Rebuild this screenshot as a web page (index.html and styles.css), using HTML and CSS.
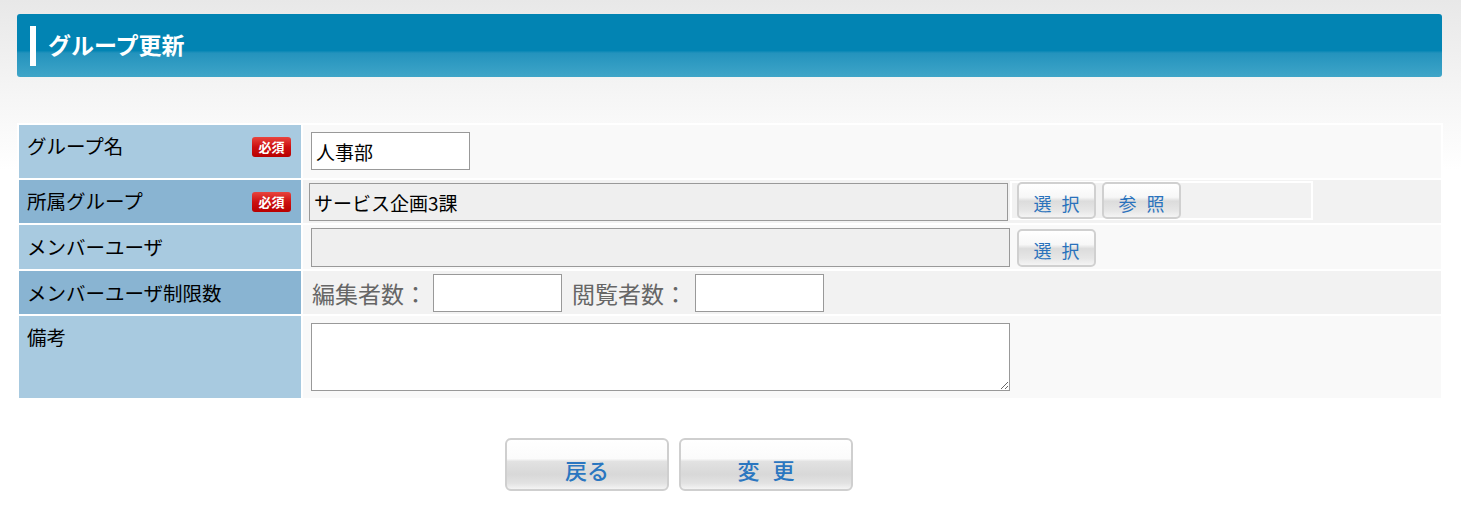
FILE: index.html
```html
<!DOCTYPE html>
<html lang="ja">
<head>
<meta charset="utf-8">
<title>グループ更新</title>
<link rel="stylesheet" href="styles.css">
</head>
<body>
<div class="page">
  <div class="title-bar"><span class="title-mark"></span><h1 class="title">グループ更新</h1></div>

  <table class="form-table">
    <tr class="row row-1">
      <th class="label label-light"><div class="label-inner"><span>グループ名</span><span class="req">必須</span></div></th>
      <td class="value value-light"><input class="txt txt-name" type="text" value="人事部"></td>
    </tr>
    <tr class="row row-2">
      <th class="label label-dark"><div class="label-inner"><span>所属グループ</span><span class="req">必須</span></div></th>
      <td class="value value-dark">
        <div class="line">
          <input class="txt txt-wide ro ro-first" type="text" value="サービス企画3課" readonly>
          <div class="btn-box">
            <button class="sbtn" type="button">選 択</button>
            <button class="sbtn" type="button">参 照</button>
          </div>
        </div>
      </td>
    </tr>
    <tr class="row row-3">
      <th class="label label-light"><div class="label-inner"><span>メンバーユーザ</span></div></th>
      <td class="value value-light">
        <div class="line line-3">
          <input class="txt txt-wide ro" type="text" value="" readonly>
          <button class="sbtn" type="button">選 択</button>
        </div>
      </td>
    </tr>
    <tr class="row row-4">
      <th class="label label-dark"><div class="label-inner"><span>メンバーユーザ制限数</span></div></th>
      <td class="value value-dark">
        <div class="line line-4">
          <span class="cap">編集者数：</span>
          <input class="txt txt-num" type="text">
          <span class="cap cap-2">閲覧者数：</span>
          <input class="txt txt-num" type="text">
        </div>
      </td>
    </tr>
    <tr class="row row-5">
      <th class="label label-light"><div class="label-inner"><span>備考</span></div></th>
      <td class="value value-light"><textarea class="memo"></textarea></td>
    </tr>
  </table>

  <div class="actions">
    <button class="bbtn bbtn-back" type="button">戻る</button>
    <button class="bbtn bbtn-go" type="button">変 更</button>
  </div>
</div>
</body>
</html>
```

FILE: styles.css
```css
html, body {
  margin: 0;
  padding: 0;
}
body {
  background: linear-gradient(to bottom, #e8e8e8 0px, #f6f6f6 100px, #fbfbfb 140px, #ffffff 170px) no-repeat;
  background-color: #fff;
  font-family: "Noto Sans CJK JP", "Noto Sans", sans-serif;
  color: #000;
  width: 1461px;
  height: 514px;
  overflow: hidden;
}
.page {
  padding: 14px 19px 0 17px;
}
.title-bar {
  height: 63px;
  border-radius: 3px;
  background: linear-gradient(to bottom, #0284b3 0%, #0284b3 58%, #2493bd 62%, #3fa5c8 100%);
  display: flex;
  align-items: center;
  padding-left: 13px;
  box-sizing: border-box;
}
.title-mark {
  width: 6px;
  height: 40px;
  background: #fff;
  margin-right: 12px;
}
.title {
  margin: 0;
  color: #fff;
  font-size: 23px;
  font-weight: bold;
  line-height: 1;
  padding-bottom: 2px;
}
.form-table {
  margin-top: 46px;
  width: 1426px;
  border-collapse: separate;
  border-spacing: 2px;
  background: #fff;
  table-layout: fixed;
}
.label {
  width: 282px;
  box-sizing: border-box;
  text-align: left;
  vertical-align: top;
  font-weight: normal;
  font-size: 19.5px;
  padding: 0 10px 0 8px;
}
.label-inner {
  display: flex;
  justify-content: space-between;
  align-items: center;
  height: 24px;
  line-height: 24px;
}
.row-1 .label { padding-top: 9px; height: 53px; }
.row-2 .label { padding-top: 9px; height: 43px; }
.row-3 .label { padding-top: 10px; height: 44px; }
.row-4 .label { padding-top: 10px; height: 43px; }
.row-5 .label { padding-top: 9px; height: 82px; }
.label-light { background: #a8cae0; }
.label-dark { background: #89b4d2; }
.value-light { background: #f9f9f9; }
.value-dark { background: #f2f2f2; }
.value {
  box-sizing: border-box;
  vertical-align: top;
  padding: 0 0 0 8px;
}
.req {
  display: inline-block;
  width: 39px;
  height: 20px;
  line-height: 20px;
  border-radius: 3px;
  background: linear-gradient(to bottom, #e8453e 0%, #cc1010 50%, #b80000 100%);
  color: #fff;
  font-size: 13px;
  font-weight: bold;
  text-align: center;
  margin-top: 2px;
}
.txt {
  box-sizing: border-box;
  border: 1px solid #999;
  background: #fff;
  font-family: "Noto Sans CJK JP", sans-serif;
  font-size: 19px;
  padding: 0 4px;
  margin: 0;
  outline: none;
  color: #000;
}
.txt-name {
  width: 159px;
  height: 38px;
  margin-top: 7px;
}
.line {
  display: flex;
  align-items: flex-start;
}
.row-2 .value { padding-left: 6px; padding-top: 1px; }
.txt-wide {
  width: 699px;
  height: 38px;
}
.ro {
  background: #efefef;
}
.ro-first {
  margin-top: 2px;
}
.btn-box {
  margin-left: 2px;
  width: 303px;
  height: 39px;
  box-sizing: border-box;
  border: 2px solid #fff;
  background: #f2f2f2;
  display: flex;
  gap: 6px;
  padding-left: 5px;
  align-items: center;
}
.sbtn {
  width: 79px;
  height: 37px;
  box-sizing: border-box;
  border: 2px solid #d0d0d0;
  border-radius: 5px;
  background: linear-gradient(to bottom, #ffffff 0%, #f7f7f7 40%, #dcdcdc 52%, #e6e6e6 80%, #f4f4f4 100%);
  color: #2a72bc;
  font-family: "Noto Sans CJK JP", sans-serif;
  font-size: 18px;
  letter-spacing: 3px;
  padding: 4px 0 0 3px;
  margin: 0;
  line-height: 1;
}
.row-3 .value { padding-top: 3px; }
.line-3 .sbtn { margin-left: 7px; margin-top: 1px; height: 38px; }
.line-3 .txt-wide { height: 39px; }
.row-4 .value { padding: 1px 0 0 2px; }
.line-4 {
  align-items: center;
  height: 41px;
}
.cap {
  font-size: 23px;
  color: #666;
  background: #f2f2f2;
  padding-left: 7px;
  padding-right: 6px;
  line-height: 38px;
}
.cap-2 {
  padding-left: 10px;
  padding-right: 8px;
  background: transparent;
}
.txt-num {
  width: 129px;
  height: 38px;
  margin-left: 0;
}
.row-5 .value { padding-top: 7px; }
.memo {
  display: block;
  box-sizing: border-box;
  width: 699px;
  height: 68px;
  border: 1px solid #999;
  background: #fff;
  margin: 0;
  resize: both;
}
.actions {
  display: flex;
  gap: 10px;
  padding-left: 488px;
  margin-top: 38px;
}
.bbtn {
  height: 53px;
  box-sizing: border-box;
  border: 2px solid #cfcfcf;
  border-radius: 6px;
  background: linear-gradient(to bottom, #ffffff 0%, #fbfbfb 38%, #e2e2e2 44%, #d8d8d8 70%, #e2e2e2 88%, #f4f4f4 100%);
  color: #2a76c0;
  font-family: "Noto Sans CJK JP", sans-serif;
  font-size: 22px;
  font-weight: 500;
  padding: 8px 0 0 0;
  margin: 0;
  line-height: 1;
}
.bbtn-back { width: 164px; }
.bbtn-go { width: 174px; letter-spacing: 4px; padding-left: 4px; }
```
